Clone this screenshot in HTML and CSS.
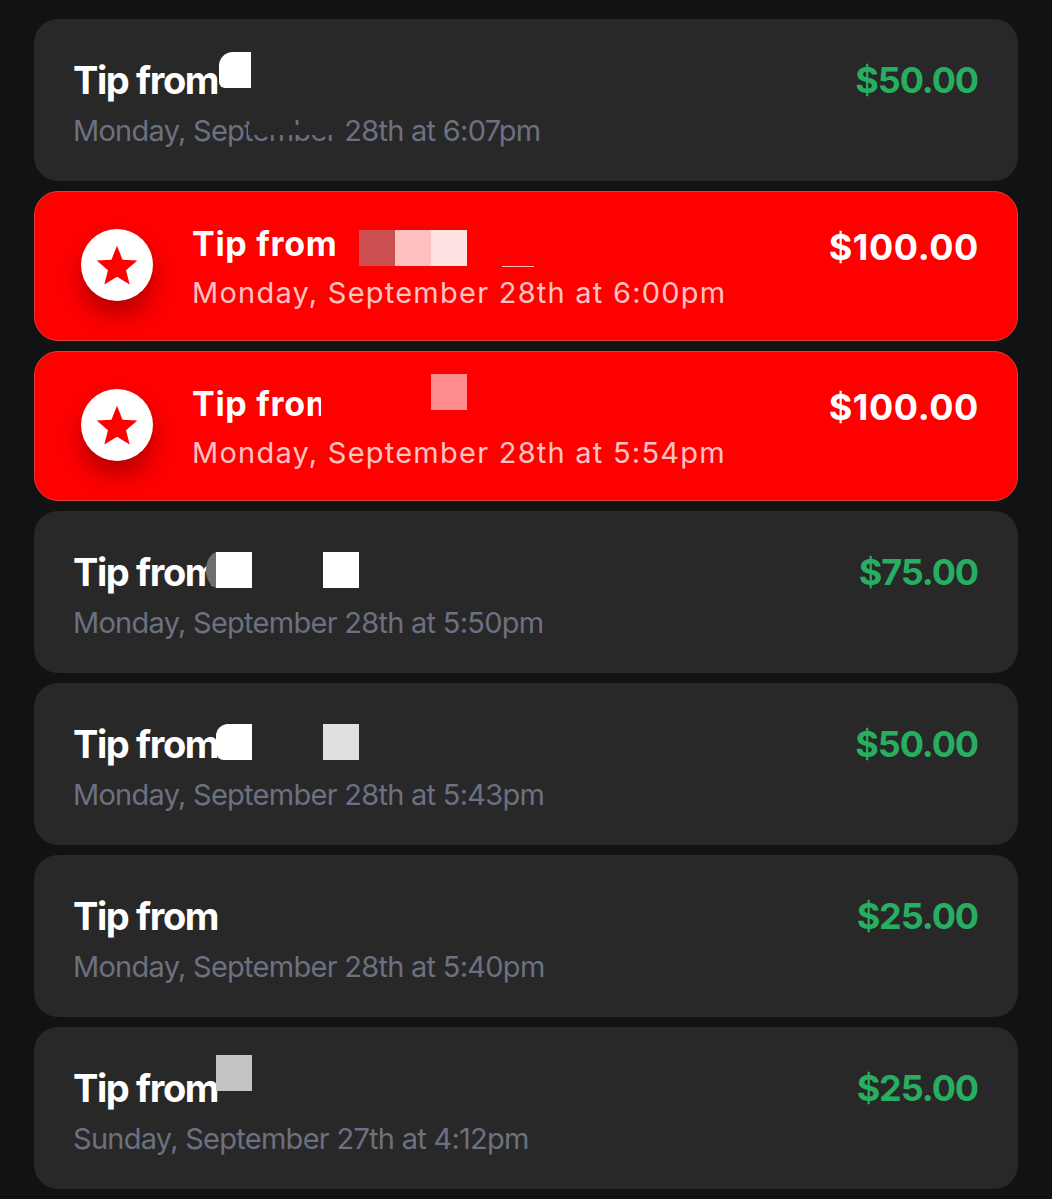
FILE: index.html
```html
<!DOCTYPE html>
<html lang="en">
<head>
<meta charset="utf-8">
<title>Tips</title>
<link rel="stylesheet" href="styles.css">
</head>
<body>
<main class="list">
  <article class="card">
    <div class="info"><h2 class="title">Tip from</h2><p class="date">Monday, September 28th at 6:07pm</p></div>
    <div class="amount">$50.00</div>
    <span class="patch p1a"></span><span class="patch p1b"></span>
  </article>
  <article class="card top">
    <div class="badge"><svg viewBox="0 0 24 24" class="star"><path d="M12 2l2.9 7.2 7.7.5-5.9 5 1.9 7.5-6.6-4.1-6.6 4.1 1.9-7.5-5.9-5 7.7-.5z"/></svg></div>
    <div class="info"><h2 class="title">Tip from</h2><p class="date">Monday, September 28th at 6:00pm</p></div>
    <div class="amount">$100.00</div>
    <span class="patch p2a"></span><span class="patch p2b"></span><span class="patch p2c"></span><span class="patch p2d"></span><span class="patch p2e"></span>
  </article>
  <article class="card top">
    <div class="badge"><svg viewBox="0 0 24 24" class="star"><path d="M12 2l2.9 7.2 7.7.5-5.9 5 1.9 7.5-6.6-4.1-6.6 4.1 1.9-7.5-5.9-5 7.7-.5z"/></svg></div>
    <div class="info"><h2 class="title">Tip from</h2><p class="date">Monday, September 28th at 5:54pm</p></div>
    <div class="amount">$100.00</div>
    <span class="patch p3a"></span><span class="patch p3b"></span>
  </article>
  <article class="card">
    <div class="info"><h2 class="title">Tip from</h2><p class="date">Monday, September 28th at 5:50pm</p></div>
    <div class="amount">$75.00</div>
    <span class="patch p4o"></span><span class="patch p4a"></span><span class="patch p4b"></span>
  </article>
  <article class="card">
    <div class="info"><h2 class="title">Tip from</h2><p class="date">Monday, September 28th at 5:43pm</p></div>
    <div class="amount">$50.00</div>
    <span class="patch p4a p5a"></span><span class="patch p4b p5b"></span>
  </article>
  <article class="card">
    <div class="info"><h2 class="title">Tip from</h2><p class="date">Monday, September 28th at 5:40pm</p></div>
    <div class="amount">$25.00</div>
    <span class="patch p6a"></span>
  </article>
  <article class="card">
    <div class="info"><h2 class="title">Tip from</h2><p class="date">Sunday, September 27th at 4:12pm</p></div>
    <div class="amount">$25.00</div>
    <span class="patch p7a"></span>
  </article>
</main>
</body>
</html>
```
FILE: styles.css
```css
* { box-sizing: border-box; }
html, body { margin: 0; height: 1199px; overflow: hidden; background: #121212; }
body { font-family: Inter, "Noto Sans", sans-serif; }
.list { display: flex; flex-direction: column; gap: 10px; padding: 19px 34px 0; }
.card { position: relative; display: flex; justify-content: space-between; align-items: flex-start; height: 162px; padding: 34px 40px 0 39px; border-radius: 24px; background: #282828; }
.info { flex: 1; min-width: 0; }
.title { margin: 0; height: 58px; font-size: 38px; line-height: 54px; font-weight: 700; letter-spacing: -1.4px; color: #fff; }
.date { margin: 0; font-size: 29px; line-height: 40px; font-weight: 400; letter-spacing: -.73px; color: #6c7080; }
.amount { font-size: 36px; line-height: 54px; font-weight: 700; letter-spacing: -1.1px; color: #27ae60; }
.card.top { height: 150px; padding: 25px 38px 0 46px; gap: 39px; background: #f00; border: 1px solid #e53935; }
.top .title { height: 56px; font-size: 34px; letter-spacing: .7px; }
.top .date { font-size: 29px; letter-spacing: 1.24px; color: #ffc2c2; }
.top .amount { margin-top: 3px; color: #fff; letter-spacing: .6px; }
.badge { display: flex; flex: none; align-items: center; justify-content: center; width: 72px; height: 72px; margin-top: 12px; border-radius: 50%; background: #fff; box-shadow: 0 14px 24px rgba(90, 0, 0, .45); }
.star { width: 46px; height: 46px; fill: #f00; }
.patch { position: absolute; width: 36px; height: 36px; background: #fff; }
.p1a { left: 185px; top: 33px; width: 32px; border-top-left-radius: 14px; border-bottom-left-radius: 6px; }
.p1b { left: 214px; top: 106px; width: 92px; height: 10px; background: #282828; }
.p2a { left: 324px; top: 38px; background: #cd5050; }
.p2b { left: 360px; top: 38px; background: #ffc0c0; }
.p2c { left: 396px; top: 38px; background: #ffe3e3; }
.p2d { left: 300px; top: 30px; width: 24px; height: 50px; background: #f00; }
.p2e { left: 467px; top: 74px; width: 32px; height: 1px; background: #ffc0c0; }
.p3a { left: 396px; top: 22px; background: #ff8c8c; }
.p3b { left: 286px; top: 20px; width: 100px; height: 50px; background: #f00; }
.p4o { left: 172px; top: 41px; width: 24px; background: #6e6e6e; border-radius: 50%; }
.p4a { left: 182px; top: 41px; }
.p4b { left: 289px; top: 41px; }
.p5a { border-bottom-left-radius: 8px; border-top-left-radius: 12px; }
.p5b { background: #e0e0e0; }
.p6a { left: 184px; top: 40px; width: 40px; height: 40px; background: #282828; }
.p7a { left: 182px; top: 28px; background: #c4c4c4; }
```
